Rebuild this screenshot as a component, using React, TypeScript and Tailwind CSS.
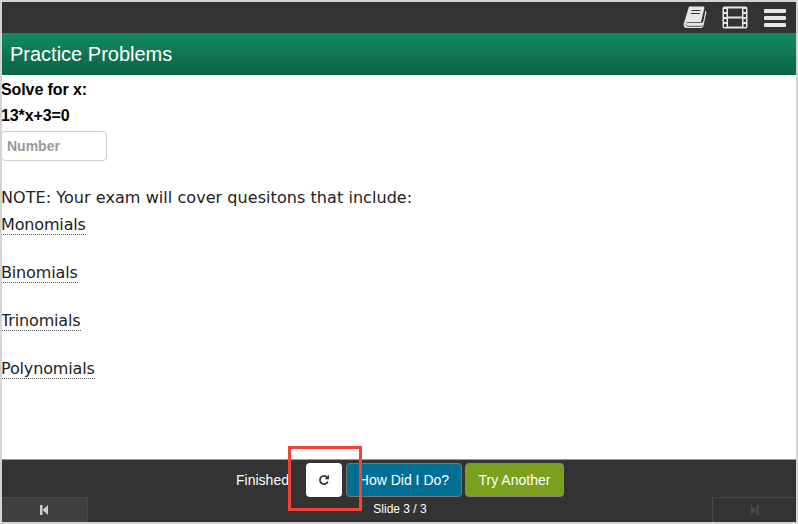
import { useState } from "react";

const arial = "font-['Liberation_Sans',Arial,sans-serif]";
const dejavu = "font-['DejaVu_Sans',Verdana,sans-serif]";

const terms = ["Monomials", "Binomials", "Trinomials", "Polynomials"];

function BookIcon() {
  return (
    <svg width="24" height="23" viewBox="0 0 24 23" fill="none">
      <path d="M6 0.5H20.5L21.5 1.5L18 16H5.5C3.5 16 2.8 17 3 18.5L0.5 18.5Z" fill="#e6e6e6" />
      <path d="M3 18.5C3 17 4.5 16.8 6 16.8H18.5C19.5 16.8 20 16 20.5 14.5L22.5 4.5L23.5 6L20.5 19.5C20.2 21 19.5 22 18 22H4C2 22 0.5 21 0.5 18.5Z" fill="#e6e6e6" />
      <path d="M3.5 18.8C3.5 19.6 4.2 20.3 5 20.3H18C18.8 20.3 19.2 20 19.5 19" stroke="#333333" strokeWidth="0.8" />
      <path d="M8.5 4.5H17.5M7.8 7.5H16.8" stroke="#333333" strokeWidth="1.2" />
    </svg>
  );
}

function FilmIcon() {
  return (
    <svg width="26" height="23" viewBox="0 0 26 23" fill="none">
      <rect x="0.5" y="0.5" width="25" height="22" rx="2" fill="#e6e6e6" />
      <rect x="6" y="2.5" width="14" height="8" fill="#333333" />
      <rect x="6" y="12.5" width="14" height="8" fill="#333333" />
      <rect x="2" y="3" width="2.5" height="3" fill="#333333" />
      <rect x="2" y="8" width="2.5" height="3" fill="#333333" />
      <rect x="2" y="13" width="2.5" height="3" fill="#333333" />
      <rect x="2" y="18" width="2.5" height="3" fill="#333333" />
      <rect x="21.5" y="3" width="2.5" height="3" fill="#333333" />
      <rect x="21.5" y="8" width="2.5" height="3" fill="#333333" />
      <rect x="21.5" y="13" width="2.5" height="3" fill="#333333" />
      <rect x="21.5" y="18" width="2.5" height="3" fill="#333333" />
    </svg>
  );
}

function MenuIcon() {
  return (
    <div className="flex w-[22px] flex-col gap-[3px]">
      <div className="h-1 rounded-[1px] bg-[#e6e6e6]" />
      <div className="h-1 rounded-[1px] bg-[#e6e6e6]" />
      <div className="h-1 rounded-[1px] bg-[#e6e6e6]" />
    </div>
  );
}

function SkipIcon({ color, flip }: { color: string; flip?: boolean }) {
  return (
    <svg width="8" height="10" viewBox="0 0 8 10" className={flip ? "rotate-180" : ""}>
      <rect x="0" y="0" width="2.5" height="10" fill={color} />
      <path d="M8 0V10L2.5 5Z" fill={color} />
    </svg>
  );
}

function ReloadIcon() {
  return (
    <svg width="12" height="12" viewBox="0 0 12 12" fill="none">
      <path d="M9.8 7.6A4.1 4.1 0 1 1 9.2 3.4" stroke="#333333" strokeWidth="1.7" />
      <path d="M11 0.8V5.2H6.6Z" fill="#333333" />
    </svg>
  );
}

export default function App() {
  const [answer, setAnswer] = useState("");

  return (
    <div className={`relative flex h-[524px] w-[798px] flex-col overflow-hidden border-2 border-[#d4d4d4] bg-white ${arial}`}>
      {/* Top bar */}
      <div className="flex h-[31px] shrink-0 items-center justify-end bg-[#333333] pr-[10px]">
        <BookIcon />
        <div className="ml-[15px]">
          <FilmIcon />
        </div>
        <div className="ml-[16px]">
          <MenuIcon />
        </div>
      </div>

      {/* Title */}
      <div className="flex h-[42px] shrink-0 items-center bg-gradient-to-b from-[#138a63] to-[#0b6346] pl-2">
        <h1 className="text-xl leading-none text-white">Practice Problems</h1>
      </div>

      {/* Content */}
      <div className="-ml-px flex flex-1 flex-col text-black">
        <p className="mt-[4px] h-[26px] text-base/[22px] font-bold tracking-[-0.1px]">Solve for x:</p>
        <p className="h-[26px] text-base/[22px] font-bold tracking-[-0.1px]">13*x+3=0</p>
        <input
          value={answer}
          onChange={(e) => setAnswer(e.target.value)}
          placeholder="Number"
          className="h-[30px] w-[106px] rounded-[4px] border border-[#cccccc] pl-[5px] text-sm font-bold outline-none placeholder:text-[#999999]"
        />
        <div className={`${dejavu} mt-[25px] text-base/6 text-[#222222]`}>
          <p className="tracking-[0.06px]">NOTE: Your exam will cover quesitons that include:</p>
          <div className="mt-[5px] flex flex-col items-start gap-[28px]">
            {terms.map((t) => (
              <span key={t} className="border-b border-dotted border-[#555555] leading-[19px] tracking-[-0.15px]">
                {t}
              </span>
            ))}
          </div>
        </div>
      </div>

      {/* Footer */}
      <div className="h-[63px] shrink-0 border-t border-[#999999] bg-[#333333]">
        <div className="flex h-[37px] items-center justify-center pt-[3px] pl-[2px]">
          <span className="mr-[17px] text-sm text-white">Finished</span>
          <button className="mr-[4px] flex h-[34px] w-[36px] items-center justify-center rounded-[4px] bg-white">
            <ReloadIcon />
          </button>
          <button className="mr-[3px] h-[34px] w-[116px] rounded-[4px] border border-[#777777] bg-[#006f94] text-sm text-white">
            How Did I Do?
          </button>
          <button className="h-[34px] w-[99px] rounded-[4px] border border-[#888888] bg-[#7b9f1e] text-sm text-white">
            Try Another
          </button>
        </div>
        <div className="flex h-[25px] items-stretch justify-between">
          <div className="flex w-[86px] items-center justify-center border-t border-r border-[#484848] bg-[#404040] pr-[2px]">
            <SkipIcon color="#c4ccd4" />
          </div>
          <span className="self-center pb-[1px] text-xs text-white">Slide 3 / 3</span>
          <div className="flex w-[84px] items-center justify-center border-t border-l border-[#484848]">
            <SkipIcon color="#4a4a4a" flip />
          </div>
        </div>
      </div>

      {/* Annotation */}
      <div className="absolute left-[286px] top-[444px] h-[65px] w-[74px] border-[3px] border-[#f44336]" />
    </div>
  );
}
